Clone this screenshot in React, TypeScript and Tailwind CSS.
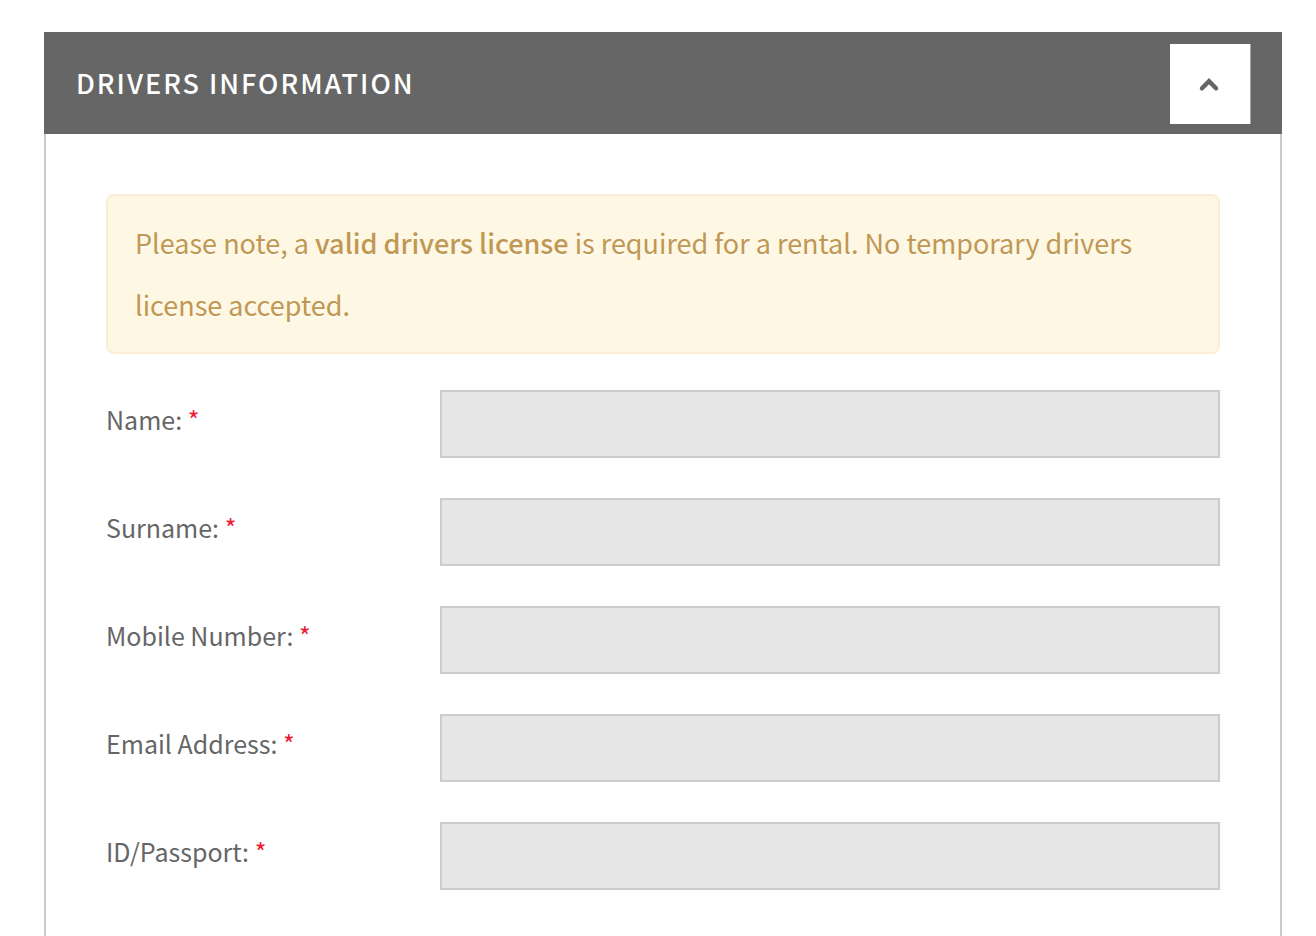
import { useState } from "react";

const fields = [
  { id: "name", label: "Name:", type: "text" },
  { id: "surname", label: "Surname:", type: "text" },
  { id: "mobile", label: "Mobile Number:", type: "tel" },
  { id: "email", label: "Email Address:", type: "email" },
  { id: "passport", label: "ID/Passport:", type: "text" },
];

export default function App() {
  const [open, setOpen] = useState(true);

  return (
    <main className="flex min-h-screen flex-col bg-white pt-8 pr-[34px] pl-11 font-['Noto_Sans_CJK_SC',sans-serif] text-[#666666]">
      <header className="flex items-start justify-between bg-[#666666] px-8 pt-3 pb-[10px]">
        <h1 className="text-[27px] leading-[78px] font-medium tracking-[2px] text-white uppercase">
          Drivers Information
        </h1>
        <button
          type="button"
          aria-label="Toggle drivers information"
          aria-expanded={open}
          onClick={() => setOpen(!open)}
          className="flex size-20 items-center justify-center bg-white shadow-[1px_0_0_#a6a6a6]"
        >
          <svg
            viewBox="0 0 24 24"
            className={open ? "size-6" : "size-6 rotate-180"}
            fill="none"
            stroke="#666666"
            strokeWidth="4.4"
            strokeLinecap="round"
            aria-hidden="true"
          >
            <path d="M4 16.3 11 9.1l7 7.2" />
          </svg>
        </button>
      </header>

      {open && (
        <form className="flex-1 border-x-2 border-[#cccccc] px-[60px] pt-[60px]">
          <p className="mb-9 rounded-lg border-2 border-[#fbeed5] bg-[#fdf7e3] px-[27px] py-4 text-[27px] leading-[62px] text-[#c09853] [text-shadow:0_2px_0_rgba(255,255,255,0.5)]">
            Please note, a <strong className="font-medium">valid drivers license</strong> is required
            for a rental. No temporary drivers license accepted.
          </p>
          <div className="flex flex-col gap-10">
            {fields.map((field) => (
              <div key={field.id} className="flex items-start">
                <label htmlFor={field.id} className="w-[30%] text-[25px] leading-[58px]">
                  {field.label} <span className="text-[#ed1c34]">*</span>
                </label>
                <input
                  id={field.id}
                  name={field.id}
                  type={field.type}
                  required
                  className="h-[68px] w-[70%] rounded-none border-2 border-[#cccccc] bg-[#e6e6e6] px-4 text-[25px] outline-none"
                />
              </div>
            ))}
          </div>
        </form>
      )}
    </main>
  );
}
